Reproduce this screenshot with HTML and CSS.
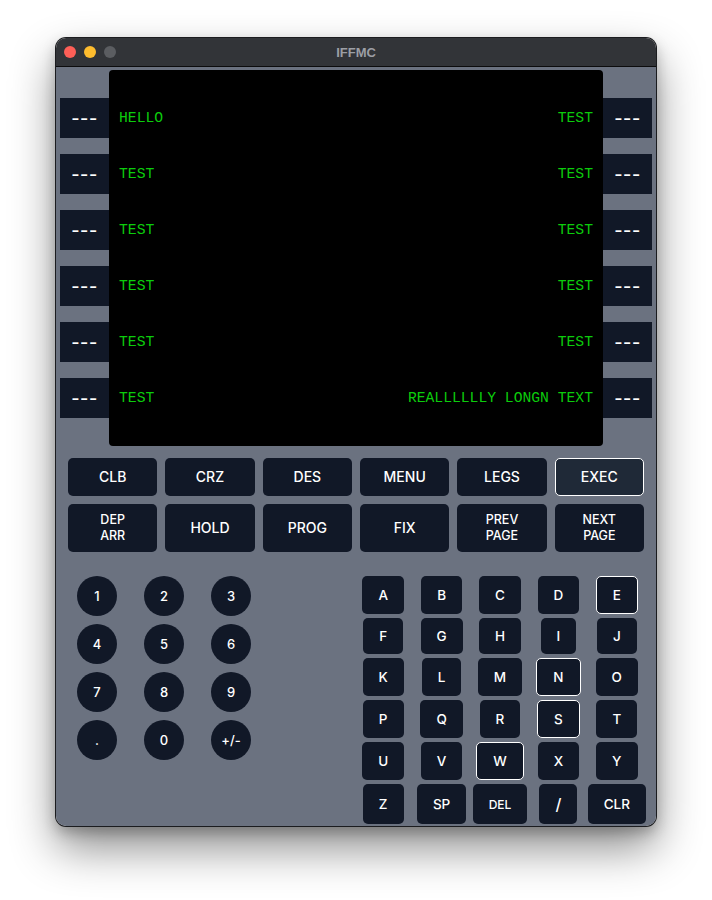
FILE: index.html
```html
<!DOCTYPE html>
<html>
<head>
<meta charset="utf-8">
<title>IFFMC</title>
<link rel="stylesheet" href="styles.css">
</head>
<body>
<div class="window">
  <div class="titlebar">
    <div class="lights">
      <span class="light red"></span>
      <span class="light yellow"></span>
      <span class="light gray"></span>
    </div>
    <div class="title">IFFMC</div>
  </div>
  <div class="body">
    <div class="top">
      <div class="lsk-col">
        <button class="lsk">---</button>
        <button class="lsk">---</button>
        <button class="lsk">---</button>
        <button class="lsk">---</button>
        <button class="lsk">---</button>
        <button class="lsk">---</button>
      </div>
      <div class="screen">
        <div class="line"><span>HELLO</span><span>TEST</span></div>
        <div class="line"><span>TEST</span><span>TEST</span></div>
        <div class="line"><span>TEST</span><span>TEST</span></div>
        <div class="line"><span>TEST</span><span>TEST</span></div>
        <div class="line"><span>TEST</span><span>TEST</span></div>
        <div class="line"><span>TEST</span><span>REALLLLLLY LONGN TEXT</span></div>
      </div>
      <div class="lsk-col">
        <button class="lsk">---</button>
        <button class="lsk">---</button>
        <button class="lsk">---</button>
        <button class="lsk">---</button>
        <button class="lsk">---</button>
        <button class="lsk">---</button>
      </div>
    </div>

    <div class="func">
      <button class="fkey">CLB</button>
      <button class="fkey">CRZ</button>
      <button class="fkey">DES</button>
      <button class="fkey">MENU</button>
      <button class="fkey">LEGS</button>
      <button class="fkey exec">EXEC</button>
      <button class="fkey tall small">DEP<br>ARR</button>
      <button class="fkey tall">HOLD</button>
      <button class="fkey tall">PROG</button>
      <button class="fkey tall">FIX</button>
      <button class="fkey tall small">PREV<br>PAGE</button>
      <button class="fkey tall small">NEXT<br>PAGE</button>
    </div>

    <div class="keypad">
      <div class="numpad">
        <button class="num">1</button>
        <button class="num">2</button>
        <button class="num">3</button>
        <button class="num">4</button>
        <button class="num">5</button>
        <button class="num">6</button>
        <button class="num">7</button>
        <button class="num">8</button>
        <button class="num">9</button>
        <button class="num">.</button>
        <button class="num">0</button>
        <button class="num">+/-</button>
      </div>
      <div class="letters">
        <button class="key">A</button>
        <button class="key">B</button>
        <button class="key">C</button>
        <button class="key">D</button>
        <button class="key active">E</button>
        <button class="key">F</button>
        <button class="key">G</button>
        <button class="key">H</button>
        <button class="key">I</button>
        <button class="key">J</button>
        <button class="key">K</button>
        <button class="key">L</button>
        <button class="key">M</button>
        <button class="key active">N</button>
        <button class="key">O</button>
        <button class="key">P</button>
        <button class="key">Q</button>
        <button class="key">R</button>
        <button class="key active">S</button>
        <button class="key">T</button>
        <button class="key">U</button>
        <button class="key">V</button>
        <button class="key active">W</button>
        <button class="key">X</button>
        <button class="key">Y</button>
        <button class="key">Z</button>
        <button class="key">SP</button>
        <button class="key small">DEL</button>
        <button class="key slash">/</button>
        <button class="key">CLR</button>
      </div>
    </div>
  </div>
</div>
</body>
</html>
```

FILE: styles.css
```css
* {
  box-sizing: border-box;
}

html, body {
  margin: 0;
  padding: 0;
  background: #ffffff;
}

body {
  font-family: Inter, "Liberation Sans", sans-serif;
  min-height: 900px;
  padding-top: 38px;
}

button {
  font-family: Inter, "Liberation Sans", sans-serif;
  border: none;
  padding: 0;
  margin: 0;
  color: #ffffff;
  background: #111827;
  cursor: pointer;
}

.window {
  width: 600px;
  margin-left: 56px;
  border-radius: 10px;
  overflow: hidden;
  box-shadow: 0 0 0 1px #1b1c1f, 0 22px 45px rgba(0, 0, 0, 0.45), 0 6px 14px rgba(0, 0, 0, 0.25);
}

.titlebar {
  height: 29px;
  background: #323438;
  border-bottom: 1px solid #0c0c0d;
  display: flex;
  align-items: center;
  position: relative;
}

.lights {
  display: flex;
  gap: 8px;
  padding-left: 8px;
}

.light {
  width: 12px;
  height: 12px;
  border-radius: 50%;
  display: block;
}

.light.red { background: #fe5f57; }
.light.yellow { background: #febc2e; }
.light.gray { background: #5b5d61; }

.title {
  position: absolute;
  left: 0;
  right: 0;
  text-align: center;
  font-family: "Liberation Sans", Arial, sans-serif;
  font-weight: bold;
  font-size: 13px;
  color: #9c9fa5;
  pointer-events: none;
}

.body {
  background: #6b7280;
  padding: 3px 0 2px;
}

.top {
  display: flex;
  padding: 0 4px;
}

.lsk-col {
  width: 49px;
  display: flex;
  flex-direction: column;
  gap: 16px;
  padding-top: 28px;
}

.lsk {
  height: 40px;
  width: 49px;
  font-size: 18px;
  font-weight: 500;
  letter-spacing: 0.5px;
  border-radius: 0;
}

.screen {
  width: 494px;
  height: 376px;
  background: #000000;
  border-radius: 4px;
  padding: 28px 10px;
  display: flex;
  flex-direction: column;
  gap: 16px;
  font-family: "Liberation Mono", "Courier New", monospace;
  font-size: 14.7px;
  color: #0ccc0c;
}

.line {
  height: 40px;
  display: flex;
  justify-content: space-between;
  align-items: center;
  white-space: pre;
}

.func {
  margin-top: 12px;
  padding: 0 12px;
  display: grid;
  grid-template-columns: repeat(6, 1fr);
  grid-template-rows: 38px 48px;
  gap: 8px;
}

.fkey {
  border-radius: 5px;
  font-size: 14px;
  font-weight: 500;
  line-height: 16px;
}

.fkey.small {
  font-size: 12.5px;
}

.fkey.exec {
  background: #1f2937;
  border: 1px solid #ffffff;
}

.keypad {
  margin-top: 24px;
  padding: 0 10px 0 21px;
  display: flex;
  justify-content: space-between;
  align-items: flex-start;
}

.numpad {
  display: grid;
  grid-template-columns: repeat(3, 40px);
  grid-auto-rows: 40px;
  column-gap: 27px;
  row-gap: 8px;
}

.num {
  border-radius: 50%;
  font-size: 13px;
  font-weight: 500;
}

.letters {
  width: 292px;
  display: grid;
  grid-template-columns: repeat(5, 1fr);
  grid-template-rows: 38px 36px 38px 38px 38px 40px;
  row-gap: 4px;
  justify-items: center;
}

.key {
  height: 100%;
  padding: 0 16px;
  border-radius: 5px;
  font-size: 13.5px;
  font-weight: 500;
}

.key.small {
  font-size: 12px;
}

.key.slash {
  font-size: 16px;
}

.key.active {
  border: 1px solid #ffffff;
}
```
